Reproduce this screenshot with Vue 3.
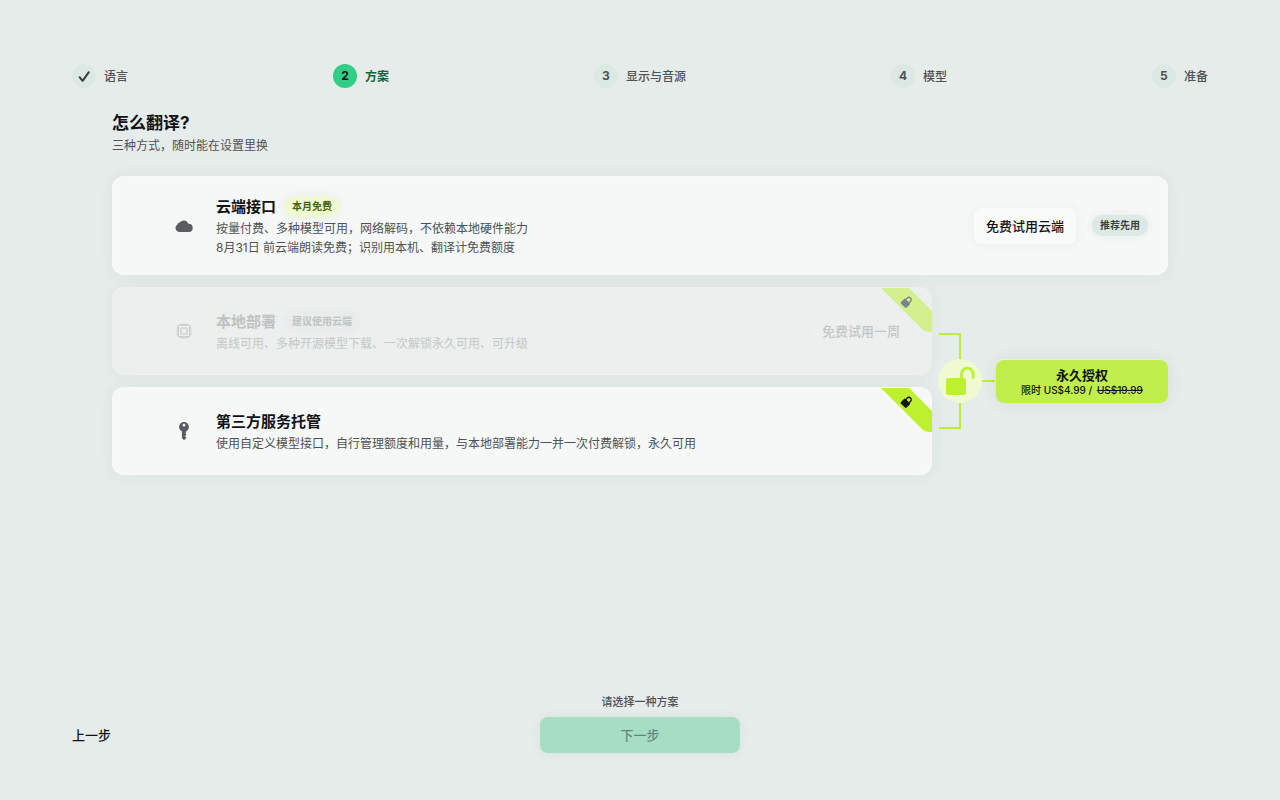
<script setup>
const steps = [
  { id: 1, label: '语言', state: 'done' },
  { id: 2, label: '方案', state: 'current' },
  { id: 3, label: '显示与音源', state: 'todo' },
  { id: 4, label: '模型', state: 'todo' },
  { id: 5, label: '准备', state: 'todo' },
]
</script>

<template>
  <div class="page">
    <ol class="steps">
      <li v-for="step in steps" :key="step.id" class="step" :class="step.state">
        <span class="dot">
          <svg v-if="step.state === 'done'" width="14" height="14" viewBox="0 0 14 14" aria-hidden="true">
            <path d="M2.6 8.2 5.6 11.8 11.8 3.2" fill="none" stroke="currentColor" stroke-width="2" stroke-linecap="round" stroke-linejoin="round" />
          </svg>
          <template v-else>{{ step.id }}</template>
        </span>
        <span class="step-label">{{ step.label }}</span>
      </li>
    </ol>

    <main class="content">
      <header class="heading">
        <h1>怎么翻译?</h1>
        <p>三种方式，随时能在设置里换</p>
      </header>

      <section class="card cloud">
        <span class="icon">
          <svg width="20" height="16" viewBox="0 0 20 16" aria-hidden="true">
            <path d="M5 14A4 4 0 0 1 3.4 6.6 2.9 2.9 0 0 1 6 4.3 4.9 4.9 0 0 1 14.4 5.8 4.1 4.1 0 0 1 14.8 14Z" fill="currentColor" />
          </svg>
        </span>
        <div class="body">
          <div class="title-row">
            <h2>云端接口</h2>
            <span class="badge lime">本月免费</span>
          </div>
          <p>按量付费、多种模型可用，网络解码，不依赖本地硬件能力</p>
          <p>8月31日 前云端朗读免费；识别用本机、翻译计免费额度</p>
        </div>
        <button type="button" class="trial">免费试用云端</button>
        <span class="badge mint">推荐先用</span>
      </section>

      <div class="paid">
        <div class="paid-cards">
          <section class="card local">
            <span class="icon">
              <svg width="16" height="16" viewBox="0 0 16 16" fill="none" stroke="currentColor" aria-hidden="true">
                <rect x="2.2" y="2.2" width="11.6" height="11.6" rx="1.6" stroke-width="1.3" />
                <rect x="5" y="5" width="6" height="6" rx="0.4" stroke-width="1.1" />
                <path d="M5 .5V2M7 .5V2M9 .5V2M11 .5V2M5 14V15.5M7 14V15.5M9 14V15.5M11 14V15.5M.5 5H2M.5 7H2M.5 9H2M.5 11H2M14 5H15.5M14 7H15.5M14 9H15.5M14 11H15.5" stroke-width="0.9" />
              </svg>
            </span>
            <div class="body">
              <div class="title-row">
                <h2>本地部署</h2>
                <span class="badge gray">建议使用云端</span>
              </div>
              <p>离线可用、多种开源模型下载、一次解锁永久可用、可升级</p>
            </div>
            <button type="button" class="trial" disabled>免费试用一周</button>
            <svg class="ribbon" width="52" height="46" viewBox="0 0 52 46" aria-hidden="true">
              <path d="M1 1H29L52 24V45H50Q45 45 42 42Z" fill="#bdf02f" />
              <g class="lock" transform="translate(26.8 14.8) rotate(45)">
                <rect x="-4" y="-1.2" width="8" height="6.6" rx="1.2" fill="currentColor" />
                <path d="M-2.3-1V-3A2.3 2.3 0 0 1 2.3-3V-1" fill="none" stroke="currentColor" stroke-width="1.3" />
              </g>
            </svg>
          </section>

          <section class="card custom">
            <span class="icon">
              <svg width="12" height="20" viewBox="0 0 12 20" aria-hidden="true">
                <path d="M6 1A4.9 4.9 0 0 0 3.9 10.3V17.1L6 19.2 8.5 16.8 7 15.2 8.5 13.6 7.4 12.3 8.1 11.6V10.3A4.9 4.9 0 0 0 6 1ZM6 2.8A1.4 1.4 0 1 1 6 5.6 1.4 1.4 0 0 1 6 2.8Z" fill="currentColor" fill-rule="evenodd" />
              </svg>
            </span>
            <div class="body">
              <div class="title-row">
                <h2>第三方服务托管</h2>
              </div>
              <p>使用自定义模型接口，自行管理额度和用量，与本地部署能力一并一次付费解锁，永久可用</p>
            </div>
            <svg class="ribbon" width="52" height="46" viewBox="0 0 52 46" aria-hidden="true">
              <path d="M1 1H29L52 24V45H50Q45 45 42 42Z" fill="#bdf02f" />
              <g class="lock" transform="translate(26.8 14.8) rotate(45)">
                <rect x="-4" y="-1.2" width="8" height="6.6" rx="1.2" fill="currentColor" />
                <path d="M-2.3-1V-3A2.3 2.3 0 0 1 2.3-3V-1" fill="none" stroke="currentColor" stroke-width="1.3" />
              </g>
            </svg>
          </section>
        </div>

        <svg class="connector" width="64" height="98" viewBox="0 0 64 98" aria-hidden="true">
          <path d="M7 2H28V96H7M28 49H63" fill="none" stroke="#bdf02f" stroke-width="2" />
          <circle cx="28" cy="49" r="22" fill="#effad2" />
          <rect x="14" y="46" width="20" height="17" rx="2.5" fill="#bdf02f" />
          <path d="M29.5 47V42A5.8 5.8 0 0 1 41.1 42V45.6" fill="none" stroke="#bdf02f" stroke-width="2.8" stroke-linecap="round" />
        </svg>

        <button type="button" class="license">
          <strong>永久授权</strong>
          <span class="price">限时 US$4.99 / <s>US$19.99</s></span>
        </button>
      </div>
    </main>

    <footer class="footer">
      <button type="button" class="back">上一步</button>
      <div class="next-group">
        <span class="hint">请选择一种方案</span>
        <button type="button" class="next" disabled>下一步</button>
      </div>
    </footer>
  </div>
</template>

<style>
body {
  margin: 0;
  background: #e6ecea;
}
</style>

<style scoped>
.page {
  box-sizing: border-box;
  display: flex;
  flex-direction: column;
  min-height: 100vh;
  padding: 64px 72px 47px;
  background: #e6ecea;
  color: #111214;
  font-family: Inter, "Noto Sans CJK SC", sans-serif;
  font-size: 12px;
  line-height: 18px;
}

h1,
h2,
p,
ol {
  margin: 0;
  padding: 0;
}

button {
  border: 0;
  font: inherit;
  color: inherit;
}

.steps {
  display: flex;
  justify-content: space-between;
  list-style: none;
}

.step {
  display: flex;
  align-items: center;
  gap: 8px;
  color: #4f5154;
  font-weight: 500;
}

.step-label {
  padding-top: 2px;
}

.dot {
  display: flex;
  align-items: center;
  justify-content: center;
  width: 24px;
  height: 24px;
  border-radius: 50%;
  background: #dbe8e3;
  font-weight: 700;
}

.done .dot {
  color: #3a3c3e;
}

.current {
  color: #14633f;
  font-weight: 700;
}

.current .dot {
  background: #32cd87;
  color: #111214;
}

.content {
  padding: 22px 40px 0;
}

.heading {
  margin-bottom: 20px;
}

.heading h1 {
  font-size: 17px;
  line-height: 26px;
  font-weight: 700;
}

.heading p {
  line-height: 20px;
  color: #4f5154;
}

.card {
  position: relative;
  display: flex;
  align-items: center;
  box-sizing: border-box;
  min-height: 88px;
  padding: 12px 20px 12px 56px;
  overflow: hidden;
  border-radius: 12px;
  background: #f5f8f7;
  box-shadow: 0 0 16px rgba(30, 50, 45, 0.06), inset 0 0 2px 1px rgba(255, 255, 255, 0.4);
}

.cloud {
  min-height: 99px;
}

.icon {
  display: flex;
  flex: none;
  justify-content: center;
  width: 32px;
  margin-right: 16px;
  color: #5b5c61;
}

.body {
  flex: 1;
  color: #4f5154;
}

.body p {
  line-height: 19px;
}

.title-row {
  display: flex;
  align-items: center;
  gap: 8px;
  min-height: 25px;
}

h2 {
  color: #111214;
  font-size: 15px;
  line-height: 22px;
  font-weight: 700;
}

.badge {
  padding: 3px 8px;
  border-radius: 11px;
  font-size: 10px;
  line-height: 15px;
  font-weight: 700;
  box-shadow: 0 0 10px rgba(30, 50, 45, 0.07);
}

.lime {
  background: #effad2;
  color: #456410;
}

.mint {
  background: #dce9e4;
  color: #3d4043;
}

.trial {
  height: 36px;
  margin-right: 16px;
  padding: 0 12px;
  border-radius: 8px;
  background: #f9fafa;
  box-shadow: 0 0 12px rgba(30, 50, 45, 0.05);
  font-size: 13px;
  font-weight: 500;
}

.paid {
  display: flex;
  align-items: center;
  margin-top: 12px;
}

.paid-cards {
  display: flex;
  flex: 1;
  flex-direction: column;
  gap: 12px;
}

.local {
  background: #ebefee;
  box-shadow: 0 0 16px rgba(30, 50, 45, 0.04), inset 0 0 2px 1px rgba(255, 255, 255, 0.14);
}

.local .icon,
.local .body p {
  color: #c4c8c8;
}

.local h2 {
  color: #bfc2c1;
}

.gray {
  background: #e8edec;
  color: #bfc2c2;
  box-shadow: 0 0 10px rgba(30, 50, 45, 0.02);
}

.local .trial {
  height: 30px;
  margin-right: 0;
  background: #ecefee;
  box-shadow: 0 0 4px rgba(30, 50, 45, 0.02);
  color: #c3c6c5;
}

.ribbon {
  position: absolute;
  top: 0;
  right: 0;
  color: #111214;
}

.local .ribbon {
  color: #111827;
  opacity: 0.5;
}

.connector {
  flex: none;
}

.license {
  display: flex;
  flex-direction: column;
  align-items: center;
  width: 172px;
  padding: 6px 8px 7px;
  border-radius: 8px;
  background: #c0ee4a;
  box-shadow: 0 0 16px rgba(30, 50, 45, 0.08), 0 -1px 0 rgba(255, 255, 255, 0.4);
  cursor: pointer;
}

.license strong {
  font-size: 13px;
  line-height: 18px;
  font-weight: 700;
}

.price {
  font-size: 10px;
  line-height: 12px;
  font-weight: 500;
}

.price s {
  margin-left: 2px;
}

.footer {
  display: grid;
  grid-template-columns: 1fr 200px 1fr;
  align-items: end;
  margin-top: auto;
}

.back {
  justify-self: start;
  height: 36px;
  padding: 0;
  background: none;
  font-size: 13px;
  font-weight: 500;
  cursor: pointer;
}

.next-group {
  display: flex;
  flex-direction: column;
  gap: 6px;
  text-align: center;
}

.hint {
  color: #4f5154;
  font-size: 11px;
  font-weight: 500;
}

.next {
  height: 36px;
  border-radius: 8px;
  background: #a5dec5;
  box-shadow: 0 0 12px rgba(30, 50, 45, 0.05);
  color: #62877a;
  font-size: 13px;
  font-weight: 500;
}
</style>
